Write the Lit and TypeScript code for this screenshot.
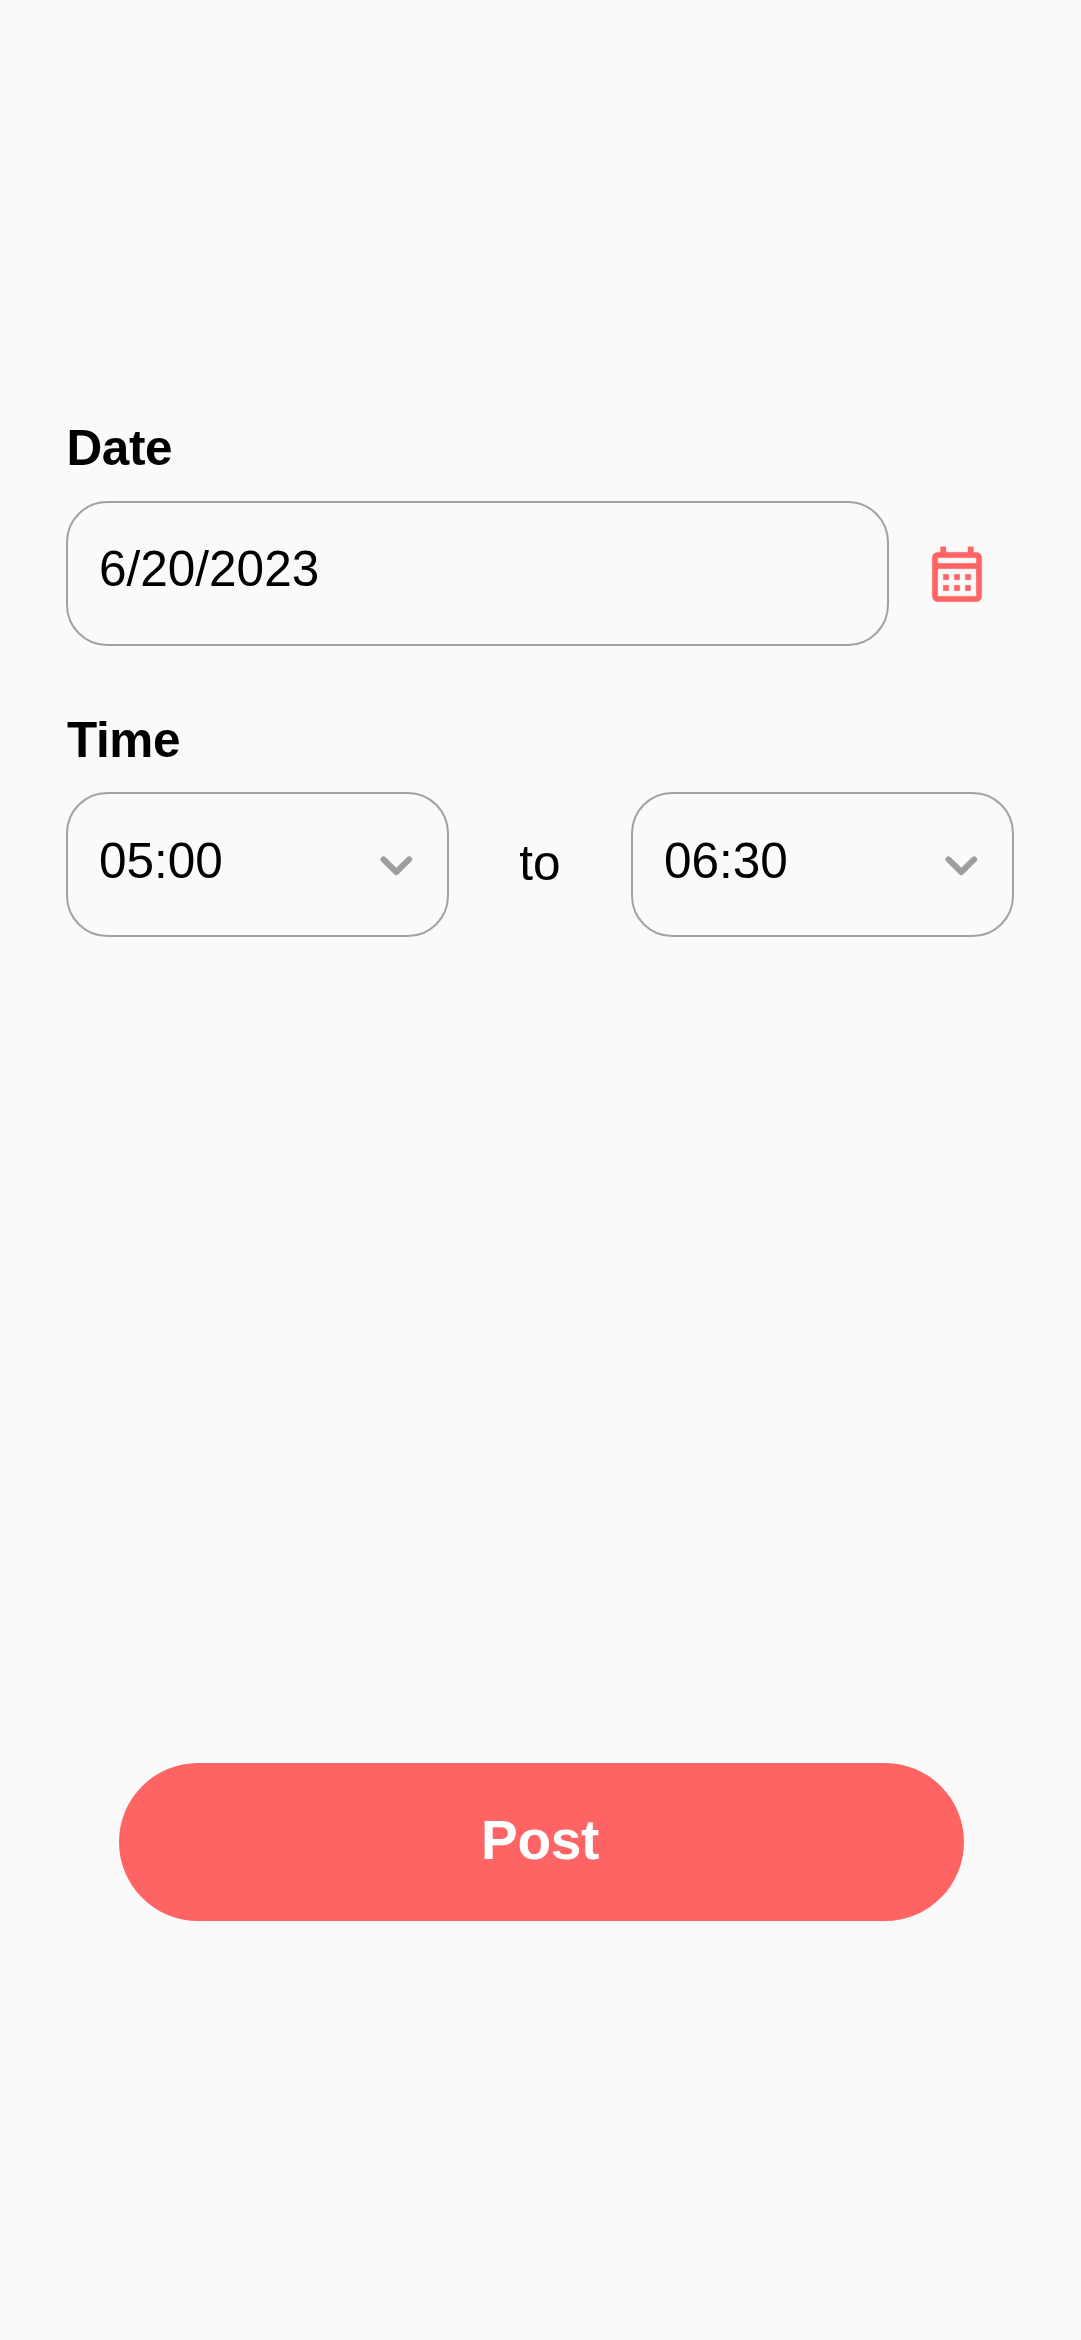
import { LitElement, html, css } from "lit";
import { customElement, property } from "lit/decorators.js";

@customElement("time-select")
class TimeSelect extends LitElement {
  @property() value = "";

  static styles = css`
    :host {
      display: flex;
      box-sizing: border-box;
      width: 383px;
      height: 145px;
      align-items: center;
      justify-content: space-between;
      border-radius: 41.25px;
      border: 2px solid #a2a2a2;
      padding: 0 34px 0 31px;
    }
    .value {
      line-height: 58px;
      margin-bottom: 7px;
    }
    .chevron {
      display: block;
      width: 33px;
      height: 20px;
      margin-top: 3px;
    }
  `;

  render() {
    return html`
      <span class="value">${this.value}</span>
      <svg class="chevron" viewBox="0 0 33 20" fill="none" stroke="#9e9e9e" stroke-width="6" stroke-linecap="round" stroke-linejoin="round">
        <path d="M3.5 3.4L16.3 16L29.1 3.4" />
      </svg>
    `;
  }
}

@customElement("app-root")
class AppRoot extends LitElement {
  static styles = css`
    :host {
      display: flex;
      flex-direction: column;
      box-sizing: border-box;
      width: 100%;
      height: 100vh;
      padding: 419px 67px 0 66px;
      background: #fafafa;
      color: #000;
      font: 49.5px "Liberation Sans", Arial, sans-serif;
    }
    .label {
      font-weight: 700;
      line-height: 58px;
      margin-bottom: 24px;
      padding-left: 0.5px;
      letter-spacing: -0.4px;
    }
    .label.time {
      margin-bottom: 23px;
      padding-left: 1px;
    }
    .row {
      display: flex;
      align-items: center;
    }
    .date-row {
      margin-bottom: 65px;
    }
    .date {
      display: flex;
      align-items: center;
      box-sizing: border-box;
      width: 823px;
      height: 145px;
      padding: 0 31px;
      border-radius: 41.25px;
      border: 2px solid #a2a2a2;
    }
    .date-value {
      line-height: 58px;
      margin-bottom: 9px;
    }
    .calendar {
      display: block;
      width: 66px;
      height: 66px;
      margin: 7px 0 0 35px;
      fill: #ff6464;
      stroke: #ff6464;
      stroke-width: 0.1;
    }
    .times {
      justify-content: space-between;
    }
    .to {
      line-height: 58px;
      margin-bottom: 3px;
    }
    .post {
      display: flex;
      align-items: center;
      justify-content: center;
      align-self: center;
      box-sizing: border-box;
      width: 845px;
      height: 158px;
      margin: 826px 0 0 2px;
      padding: 0 2px 5px 0;
      border: 0;
      border-radius: 79px;
      background: #ff6464;
      color: #fff;
      font: 700 55px "Liberation Sans", Arial, sans-serif;
      letter-spacing: -0.3px;
    }
  `;

  render() {
    return html`
      <div class="label">Date</div>
      <div class="row date-row">
        <div class="date"><span class="date-value">6/20/2023</span></div>
        <svg class="calendar" viewBox="0 0 24 24">
          <path d="M7 11h2v2H7v-2m14-6v14a2 2 0 0 1-2 2H5a2 2 0 0 1-2-2V5a2 2 0 0 1 2-2h1V1h2v2h8V1h2v2h1a2 2 0 0 1 2 2M5 7h14V5H5v2m14 12V9H5v10h14m-4-6v-2h2v2h-2m-4 0v-2h2v2h-2m-4 2h2v2H7v-2m8 2v-2h2v2h-2m-4 0v-2h2v2h-2z" />
        </svg>
      </div>
      <div class="label time">Time</div>
      <div class="row times">
        <time-select value="05:00"></time-select>
        <span class="to">to</span>
        <time-select value="06:30"></time-select>
      </div>
      <button class="post">Post</button>
    `;
  }
}
